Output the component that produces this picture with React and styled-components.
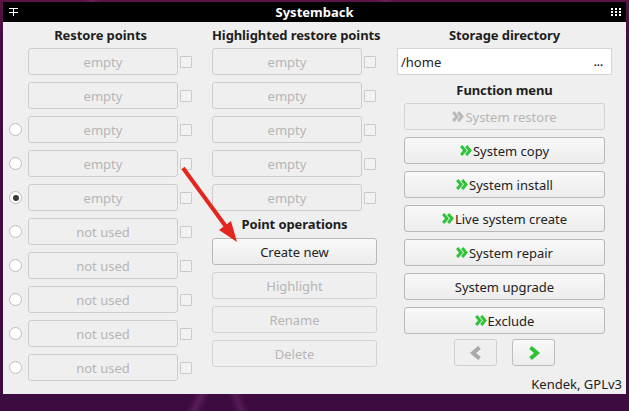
import React from 'react';
import styled, { createGlobalStyle } from 'styled-components';

const GlobalStyle = createGlobalStyle`
  html, body {
    margin: 0;
    padding: 0;
    background: #3f0b41;
  }
  body {
    font-family: 'Noto Sans', 'Liberation Sans', sans-serif;
  }
`;

const restoreRows = [
  { label: 'empty', radio: false },
  { label: 'empty', radio: false },
  { label: 'empty', radio: true },
  { label: 'empty', radio: true },
  { label: 'empty', radio: true, checked: true },
  { label: 'not used', radio: true },
  { label: 'not used', radio: true },
  { label: 'not used', radio: true },
  { label: 'not used', radio: true },
  { label: 'not used', radio: true },
];

const functions = [
  { label: 'System restore', chevron: true, disabled: true },
  { label: 'System copy', chevron: true },
  { label: 'System install', chevron: true },
  { label: 'Live system create', chevron: true },
  { label: 'System repair', chevron: true },
  { label: 'System upgrade', chevron: false },
  { label: 'Exclude', chevron: true },
];

const PinIcon = () => (
  <svg width="9" height="8" viewBox="0 0 9 8">
    <path d="M0 0.5H9M0 4.5H9M4.5 0.5V8" stroke="#fff" strokeWidth="1" />
  </svg>
);

const DotsIcon = () => (
  <svg width="10" height="8" viewBox="0 0 10 8">
    {[0, 4, 8].map((x) =>
      [0, 3, 6].map((y) => (
        <rect key={`${x}-${y}`} x={x} y={y} width="2" height="2" fill="#fff" />
      ))
    )}
  </svg>
);

const DoubleChevron = ({ color }) => (
  <svg width="12" height="11" viewBox="0 0 12 11">
    <path
      d="M1.2 1L5 5.5L1.2 10M6.2 1L10 5.5L6.2 10"
      fill="none"
      stroke={color}
      strokeWidth="3"
    />
  </svg>
);

const Chevron = ({ dir, color }) => (
  <svg width="14" height="14" viewBox="0 0 14 14">
    <path
      d={dir === 'left' ? 'M10.5 1.5L4 7L10.5 12.5' : 'M3.5 1.5L10 7L3.5 12.5'}
      fill="none"
      stroke={color}
      strokeWidth="4"
    />
  </svg>
);

const App = () => {
  return (
    <>
      <GlobalStyle />
      <Desktop>
        <Window>
          <TitleBar>
            <PinIcon />
            <Title>Systemback</Title>
            <DotsIcon />
          </TitleBar>
          <Body>
            <Column>
              <SectionTitle>Restore points</SectionTitle>
              <List>
                {restoreRows.map((row, i) => (
                  <PointRow key={i}>
                    <RadioSlot>
                      {row.radio && <Radio $checked={row.checked} />}
                    </RadioSlot>
                    <PointBox>{row.label}</PointBox>
                    <CheckBox />
                  </PointRow>
                ))}
              </List>
            </Column>

            <Column>
              <SectionTitle>Highlighted restore points</SectionTitle>
              <List>
                {[0, 1, 2, 3, 4].map((i) => (
                  <PointRow key={i}>
                    <PointBox>empty</PointBox>
                    <CheckBox />
                  </PointRow>
                ))}
              </List>
              <SectionTitle $mt={5} $mb={2}>
                Point operations
              </SectionTitle>
              <List>
                <Button>Create new</Button>
                <Button disabled>Highlight</Button>
                <Button disabled>Rename</Button>
                <Button disabled>Delete</Button>
              </List>
            </Column>

            <Column>
              <SectionTitle>Storage directory</SectionTitle>
              <PathInput>
                <span>/home</span>
                <span className="dots">...</span>
              </PathInput>
              <SectionTitle $mt={7} $mb={1}>
                Function menu
              </SectionTitle>
              <List $inset>
                {functions.map((f) => (
                  <Button key={f.label} disabled={f.disabled}>
                    {f.chevron && (
                      <DoubleChevron color={f.disabled ? '#b9b9b9' : '#2fc23a'} />
                    )}
                    {f.label}
                  </Button>
                ))}
              </List>
              <NavRow>
                <NavButton disabled>
                  <Chevron dir="left" color="#a9a9a9" />
                </NavButton>
                <NavButton>
                  <Chevron dir="right" color="#2fc23a" />
                </NavButton>
              </NavRow>
              <Footer>Kendek, GPLv3</Footer>
            </Column>
          </Body>
        </Window>
        <Annotation width="629" height="411" viewBox="0 0 629 411">
          <line x1="183" y1="168" x2="227" y2="228" stroke="#e5261f" strokeWidth="4" />
          <polygon points="237,242 219,230 231,221" fill="#e5261f" />
        </Annotation>
      </Desktop>
    </>
  );
};

const Desktop = styled.div`
  position: relative;
  width: 629px;
  height: 411px;
  box-sizing: border-box;
  padding: 2px 3px 17px 3px;
  display: flex;
  background:
    linear-gradient(115deg, transparent 46%, rgba(140, 60, 140, 0.35) 47%, transparent 48%),
    linear-gradient(70deg, transparent 30%, rgba(140, 60, 140, 0.3) 31%, transparent 32%),
    linear-gradient(180deg, #5c1245 0%, #430c45 10%, #3d0b40 100%);
  overflow: hidden;
`;

const Window = styled.div`
  flex: 1;
  display: flex;
  flex-direction: column;
  background: #efefef;
`;

const TitleBar = styled.div`
  height: 20px;
  background: #000;
  display: flex;
  align-items: center;
  padding: 0 5px 0 6px;
  color: #fff;
`;

const Title = styled.div`
  flex: 1;
  text-align: center;
  font-weight: 700;
  font-size: 13px;
`;

const Body = styled.div`
  flex: 1;
  display: grid;
  grid-template-columns: 183px 165px 215px;
  grid-template-rows: 1fr;
  column-gap: 20px;
  padding: 5px 0 0 6px;
`;

const Column = styled.div`
  display: flex;
  flex-direction: column;
  align-items: stretch;
`;

const SectionTitle = styled.div`
  height: 20px;
  line-height: 17px;
  margin-top: ${(p) => p.$mt || 0}px;
  margin-bottom: ${(p) => (p.$mb === undefined ? 1 : p.$mb)}px;
  text-align: center;
  font-size: 13px;
  font-weight: 700;
  color: #1e1e1e;
  white-space: nowrap;
  letter-spacing: -0.1px;
`;

const List = styled.div`
  display: flex;
  flex-direction: column;
  gap: 7px;
  padding: 0 ${(p) => (p.$inset ? '7px' : '0')};
`;

const PointRow = styled.div`
  display: flex;
  align-items: center;
  height: 27px;
`;

const RadioSlot = styled.div`
  width: 13px;
  margin-right: 6px;
  display: flex;
  justify-content: center;
`;

const Radio = styled.div`
  width: 11px;
  height: 11px;
  border-radius: 50%;
  border: 1px solid #bdbdbd;
  background: #fff;
  display: flex;
  align-items: center;
  justify-content: center;

  &::after {
    content: '';
    display: ${(p) => (p.$checked ? 'block' : 'none')};
    width: 6px;
    height: 6px;
    border-radius: 50%;
    background: #3a3a3a;
  }
`;

const PointBox = styled.div`
  width: 150px;
  height: 27px;
  box-sizing: border-box;
  border: 1px solid #cdcdcd;
  border-radius: 3px;
  background: #efefef;
  color: #b6b6b6;
  font-size: 13px;
  display: flex;
  align-items: center;
  justify-content: center;
`;

const CheckBox = styled.div`
  width: 12px;
  height: 12px;
  box-sizing: border-box;
  margin-left: 2px;
  border: 1px solid #cbcbcb;
  border-radius: 1px;
  background: #f2f2f2;
`;

const Button = styled.div`
  height: 27px;
  box-sizing: border-box;
  border: 1px solid ${(p) => (p.disabled ? '#d2d2d2' : '#b8b8b8')};
  border-radius: 3px;
  background: ${(p) =>
    p.disabled ? '#efefef' : 'linear-gradient(#f9f9f9, #ececec)'};
  color: ${(p) => (p.disabled ? '#b6b6b6' : '#222')};
  font-size: 13px;
  display: flex;
  align-items: center;
  justify-content: center;
  gap: 1px;
`;

const PathInput = styled.div`
  height: 27px;
  box-sizing: border-box;
  background: #fff;
  border: 1px solid #d4d4d4;
  display: flex;
  align-items: center;
  justify-content: space-between;
  padding: 0 8px 0 3px;
  font-size: 13px;
  color: #222;

  .dots {
    font-weight: 700;
    font-size: 11px;
  }
`;

const NavRow = styled.div`
  display: flex;
  justify-content: center;
  gap: 15px;
  margin-top: 5px;
`;

const NavButton = styled(Button)`
  width: 43px;
  border-color: ${(p) => (p.disabled ? '#d0d0d0' : '#bdbdbd')};
`;

const Footer = styled.div`
  margin-top: auto;
  margin-bottom: 2px;
  margin-right: -10px;
  align-self: flex-end;
  font-size: 13px;
  line-height: 16px;
  color: #222;
`;

const Annotation = styled.svg`
  position: absolute;
  left: 0;
  top: 0;
  pointer-events: none;
`;

export default App;
